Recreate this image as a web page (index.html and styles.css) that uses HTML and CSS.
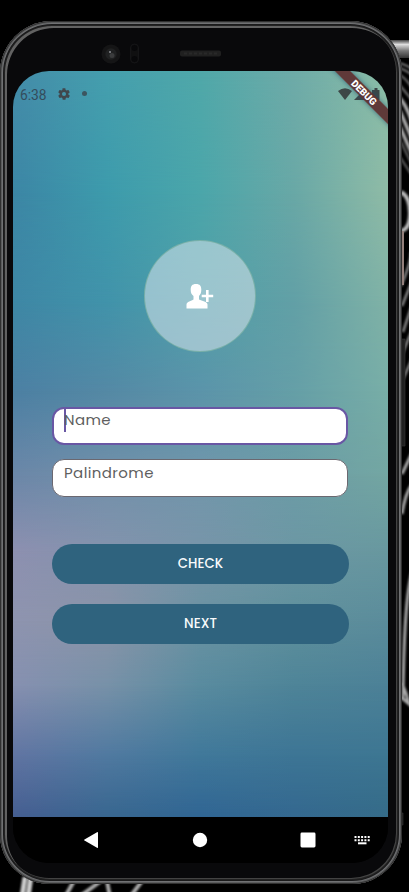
FILE: index.html
```html
<!DOCTYPE html>
<html lang="en">
<head>
<meta charset="utf-8">
<title>Palindrome</title>
<link rel="stylesheet" href="styles.css">
</head>
<body>
<svg class="backdrop" viewBox="0 0 409 892" aria-hidden="true">
  <defs>
    <filter id="soft"><feGaussianBlur stdDeviation="0.9"/></filter>
    <linearGradient id="bar" x2="0" y2="1"><stop stop-color="#444"/><stop offset=".25" stop-color="#ddd"/><stop offset=".6" stop-color="#777"/><stop offset="1" stop-color="#333"/></linearGradient>
  </defs>
  <path d="M388 40H409V58H388Z" fill="url(#bar)"/>
  <g fill="none" stroke="#aaa" filter="url(#soft)">
    <path d="M396 62Q405 64 412 69M396 67Q405 69 412 75M396 72Q406 78 412 88M398 83L412 100" stroke="#777" stroke-width="2"/>
    <path d="M398 96Q406 104 412 122M400 111L412 139M400 127L412 154" stroke-width="3.5"/>
    <path d="M401 142L412 165M400 157L411 174" stroke="#666" stroke-width="2"/>
    <path d="M401 192Q410 197 410 213T401 231" stroke="#bbb" stroke-width="4"/>
    <path d="M401 286Q411 263 411 252M402 306L412 281M403 332L412 305M401 357L412 330M403 379L412 359" stroke="#888" stroke-width="2.5"/>
    <path d="M402 474L412 453M402 514Q405 494 412 484M403 700Q404 600 412 572M402 683Q407 694 409 704L401 697" stroke-width="3"/>
    <path d="M25 877L22 897M31 876L28 897" stroke="#ccc" stroke-width="5"/>
    <path d="M75 879L65 897M101 881L79 897M107 881L110 897M142 881L130 897" stroke-width="4"/>
  </g>
  <path d="M400 231H404V285H401Z" fill="#94807b"/>
  <path d="M399 339H405V446H399ZM400 813H403V825H400Z" fill="#202020" stroke="#383838" stroke-width=".6"/>
</svg>
<main class="phone">
  <div class="sensors" aria-hidden="true">
    <svg viewBox="0 0 130 24">
      <circle cx="11" cy="12" r="9.5" fill="#151516"/><circle cx="11" cy="12" r="5.7" fill="#202122"/><circle cx="12" cy="13.5" r="2.5" fill="#3b3c3d"/><circle cx="10" cy="10" r="1" fill="#8b8e93"/>
      <rect x="30.5" y="2" width="8" height="19" rx="4" fill="#101011" stroke="#151517"/><circle cx="34.5" cy="6" r="3" fill="#08080a"/><circle cx="34.5" cy="17" r="3" fill="#08080a"/>
      <rect x="80" y="8.5" width="41" height="6" rx="2" fill="#202020"/><path d="M84 11.5H117" stroke="#292929" stroke-width="2" stroke-dasharray="3 2"/>
    </svg>
  </div>
  <section class="screen">
    <div class="app">
      <div class="wallpaper" aria-hidden="true"><i class="w0"></i><i class="w1"></i><i class="w2"></i><i class="w3"></i><i class="w4"></i><i class="w5"></i><i class="w6"></i><i class="w7"></i><i class="w8"></i><i class="w9"></i></div>
      <header class="status">
        <span class="time">6:38</span>
        <svg class="gear" viewBox="0 0 24 24"><path fill-rule="evenodd" d="M19.4 13a7.8 7.8 0 0 0 0-2l2.1-1.6a.5.5 0 0 0 .1-.7l-2-3.4a.5.5 0 0 0-.6-.2l-2.5 1a7.5 7.5 0 0 0-1.7-1L14.4 2.400a.5.5 0 0 0-.5-.4h-4a.5.5 0 0 0-.5.4L9.200 5.100a7.500 7.500 0 0 0-1.700 1L5 5.100a.5.5 0 0 0-.6.2l-2 3.400a.5.5 0 0 0 .1.700L4.600 11a7.800 7.800 0 0 0 0 2l-2.100 1.600a.5.5 0 0 0-.1.700l2 3.400c.1.200.4.300.6.200l2.500-1a7.500 7.500 0 0 0 1.700 1l.4 2.700c0 .2.200.4.500.4h4c.2 0 .5-.2.500-.4l.4-2.700a7.500 7.500 0 0 0 1.700-1l2.500 1c.2.100.5 0 .6-.2l2-3.400a.5.5 0 0 0-.1-.7zM12 15.500a3.500 3.500 0 1 1 0-7a3.500 3.500 0 0 1 0 7z"/></svg>
        <span class="dot"></span>
        <svg class="signals" viewBox="0 0 44 14"><path d="M0 4Q7 -1.500 14 4L7 13Z"/><path d="M16 13L28 1V13Z"/><path d="M34 3H36.500V1H39.500V3H41.500V13H34Z"/></svg>
      </header>
      <div class="banner-clip"><span class="banner">DEBUG</span></div>
      <div class="avatar">
        <svg viewBox="0 0 28 28"><path d="M10 2C14 2 15.300 4.200 15.300 7.500C15.300 11 14.500 12.500 13 14V17.500C16 19 21.500 19.500 21.500 22.500V26.500H.5V22.500C.5 19.500 5.500 19 7.500 17.500V14C5.500 12.500 4.700 11 4.700 7.500C4.700 4.200 6 2 10 2Z"/><path d="M20 8H22.600V12.700H27.200V15.300H22.600V20H20V15.300H15.700V12.700H20Z"/></svg>
      </div>
      <form class="form">
        <div class="field focused"><span class="caret"></span><span class="hint name">Name</span></div>
        <div class="field"><span class="hint">Palindrome</span></div>
        <div class="actions">
          <button type="button">CHECK</button>
          <button type="button">NEXT</button>
        </div>
      </form>
    </div>
    <nav class="nav">
      <svg viewBox="0 0 375 46"><path d="M71.500 22.400L84 15.200Q85 14.700 85 15.700V30.300Q85 31.300 84 30.800L71.500 23.600Q70.500 23 71.500 22.400Z"/><circle cx="187" cy="23" r="7.200"/><rect x="287.500" y="15.500" width="15" height="15" rx="1.400"/><g stroke="#fff" stroke-width="2" stroke-dasharray="2 1.300"><path d="M341.500 20H357M341.500 23.300H357"/></g><rect x="345" y="25.300" width="8.500" height="2"/></svg>
    </nav>
  </section>
</main>
</body>
</html>
```

FILE: styles.css
```css
* { box-sizing: border-box; }

body {
  margin: 0;
  width: 409px;
  height: 892px;
  overflow: hidden;
  position: relative;
  background: #000;
  font-family: Roboto, "Liberation Sans", sans-serif;
}

.backdrop {
  position: absolute;
  inset: 0;
  width: 409px;
  height: 892px;
}

.phone {
  position: relative;
  width: 402px;
  height: 863px;
  margin-top: 21px;
  padding: 22px 14px 20px 13px;
  border-radius: 52px 52px 50px 50px;
  background: #09090b;
  box-shadow:
    inset 0 0 0 1px #303030,
    inset 0 0 0 2px #5a5b5c,
    inset 0 0 0 3px #707173,
    inset 0 0 0 4px #1a1a1b,
    inset 0 0 0 5px #222,
    inset 2px 2px 0 5px #626262,
    inset -1px -1px 0 5px #434343;
}

.sensors { height: 28px; }
.sensors svg {
  display: block;
  width: 130px;
  height: 24px;
  margin: -1px 0 0 87px;
  position: relative;
}

.screen {
  width: 375px;
  height: 792px;
  margin-top: 0;
  border-radius: 36px;
  overflow: hidden;
  background: #000;
}

.sensors + .screen { margin-top: 0.6px; }

.app {
  position: relative;
  height: 746px;
  overflow: hidden;
}

.wallpaper,
.wallpaper i {
  position: absolute;
  inset: 0;
}

.wallpaper i {
  -webkit-mask-image: linear-gradient(transparent var(--from), #000 var(--to));
  mask-image: linear-gradient(transparent var(--from), #000 var(--to));
}

.w0 { --from: -1px; --to: 0px; background: linear-gradient(90deg, #448ca9, #459fae, #50a8a9, #6eaba8, #8abda7); }
.w1 { --from: 0px; --to: 120px; background: linear-gradient(90deg, #3c86a5, #3d9bac, #4ba6aa, #69a8a6, #8fbba6); }
.w2 { --from: 120px; --to: 230px; background: linear-gradient(90deg, #3e87a5, #4193aa, #509fa8, #62a0a6, #80b2a6); }
.w3 { --from: 230px; --to: 320px; background: linear-gradient(90deg, #4c80a3, #5489a5, #5b94aa, #659fa7, #78aea7); }
.w4 { --from: 320px; --to: 405px; background: linear-gradient(90deg, #6c87a8, #7190aa, #7196ab, #6c9ca6, #73a6a2); }
.w5 { --from: 405px; --to: 480px; background: linear-gradient(90deg, #8d90b0, #8493ad, #7895a9, #6c97a4, #68989f); }
.w6 { --from: 480px; --to: 550px; background: linear-gradient(90deg, #8e94af, #8b94a8, #6b93a2, #5f909c, #5b8c9b); }
.w7 { --from: 550px; --to: 615px; background: linear-gradient(90deg, #8690b0, #7791a8, #598b9f, #4e8498, #4c8197); }
.w8 { --from: 615px; --to: 685px; background: linear-gradient(90deg, #6074a2, #5079a0, #40789a, #3d7595, #3d7692); }
.w9 { --from: 685px; --to: 746px; background: linear-gradient(90deg, #455e91, #38668f, #306593, #34688f, #356b88); }

.status {
  position: relative;
  display: flex;
  align-items: center;
  height: 46px;
  padding: 0 6px 0 7px;
  color: #344c5c;
}

.time {
  width: 27px;
  font-size: 13.8px;
  line-height: 16px;
  padding-top: 2px;
}

.gear {
  width: 14px;
  height: 14px;
  margin-left: 9.5px;
  fill: #40474d;
}

.dot {
  width: 5px;
  height: 5px;
  margin-left: 11.5px;
  border-radius: 50%;
  background: #3c5660;
}

.signals {
  width: 44px;
  height: 14px;
  margin-left: auto;
  fill: #3d4747;
}

.banner-clip {
  position: absolute;
  top: 0;
  right: 0;
  width: 80px;
  height: 80px;
  overflow: hidden;
}

.banner {
  position: absolute;
  top: 16px;
  left: 6px;
  width: 100px;
  height: 11px;
  color: #fff;
  background: rgba(94, 52, 52, 0.96);
  box-shadow: 0 0 5px rgba(30, 80, 110, 0.7);
  font-size: 9.8px;
  font-weight: 900;
  line-height: 11px;
  text-align: center;
  transform: rotate(45deg);
}

.avatar {
  position: relative;
  display: grid;
  place-items: center;
  width: 112px;
  height: 112px;
  margin: 123px 0 0 131px;
  border: 1px solid rgba(118, 174, 163, 0.85);
  border-radius: 50%;
  background: rgba(218, 229, 238, 0.54);
}

.avatar svg {
  width: 28px;
  height: 28px;
  fill: #fff;
}

.form {
  position: relative;
  width: 296px;
  margin: 55px 0 0 39px;
}

.field {
  display: flex;
  align-items: flex-start;
  height: 38px;
  margin-bottom: 15px;
  padding: 3px 11px;
  border: 1px solid #6b6870;
  border-radius: 12px;
  background: #fff;
}

.field.focused {
  height: 38px;
  margin-bottom: 14px;
  padding: 0 10px;
  border: 2px solid #6957a4;
}

.caret {
  width: 2px;
  height: 23px;
  margin-right: -2px;
  background: #6957a4;
}

.hint {
  font-family: Poppins, Inter, "Open Sans", sans-serif;
  font-size: 15px;
  line-height: 20px;
  letter-spacing: 0.4px;
  color: #5f5f5f;
}

.name { padding-top: 1px; }

.actions {
  display: grid;
  gap: 20px;
  padding-top: 32px;
}

button {
  width: 297px;
  height: 40px;
  padding: 0;
  border: 0;
  border-radius: 20px;
  color: #f7fafb;
  background: #2f637e;
  font: 500 13.3px/40px Poppins, Inter, "Open Sans", sans-serif;
}

.nav {
  height: 46px;
  background: #000;
}

.nav svg {
  display: block;
  width: 375px;
  height: 46px;
  fill: #fff;
}
```
